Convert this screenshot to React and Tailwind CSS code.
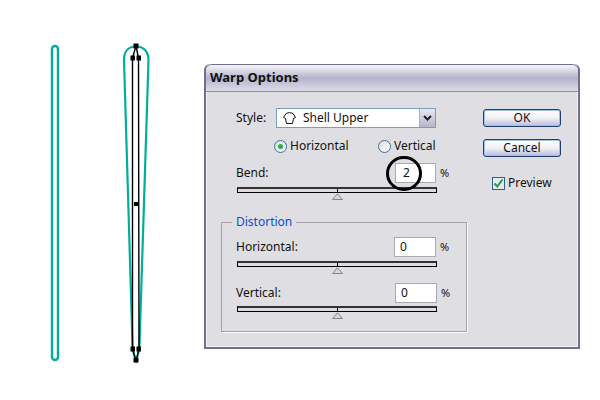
import React from 'react';

const UI_FONT = 'font-["Noto_Sans",sans-serif]';

function Slider() {
  return (
    <div className="relative w-[200px] h-[6px] ml-[1px] bg-[#dcdce0] border border-black border-t-2 border-t-[#333]">
      <div className="absolute left-[99px] top-0 w-px h-[4px] bg-black" />
      <svg className="absolute left-[93px] top-[4px]" width="13" height="8" viewBox="0 0 13 8">
        <path d="M6.5 .8 L11.5 6.5 H1.5 Z" fill="#d8d8d4" stroke="#85857d" strokeWidth="1" />
      </svg>
    </div>
  );
}

function NumberBox({ value, className }) {
  return (
    <div className={`h-[20px] bg-white border border-[#a9abb0] text-[12px] leading-[18px] pl-[5px] text-[#111] ${className}`}>{value}</div>
  );
}

function Radio({ checked }) {
  return (
    <div className="w-[13px] h-[13px] rounded-full border border-[#3f6e94] bg-gradient-to-br from-[#dcdce2] to-white flex items-center justify-center shrink-0">
      {checked && <div className="w-[5px] h-[5px] rounded-full bg-[#22b14c]" />}
    </div>
  );
}

function DialogButton({ label, className }) {
  return (
    <button className={`w-[78px] rounded-[3px] border border-[#1f3f70] bg-gradient-to-b from-white via-[#f1f1f6] to-[#b9bbdc] text-[12px] text-[#111] shadow-[inset_0_0_0_1px_#9fc0e8] ${className}`}>
      {label}
    </button>
  );
}

export default function App() {
  return (
    <div className={`relative w-[600px] h-[400px] bg-white flex overflow-hidden ${UI_FONT}`}>
      {/* paths */}
      <svg className="shrink-0" width="204" height="400" viewBox="0 0 204 400">
        <rect x="52" y="46" width="6" height="314" rx="3" fill="none" stroke="#00ae9c" strokeWidth="2.4" />
        <path d="M136 46.5 C128 46.5 124 52 124 60 C124.5 70 128 200 132.5 345 C133 352 135 359 136 360 C137 359 139 352 139.5 345 C144 200 148 70 148.5 60 C148.5 52 144 46.5 136 46.5 Z" fill="none" stroke="#00ae9c" strokeWidth="2.2" />
        <path d="M132.5 58 V349 L136 361 L139 349 L138.5 58 L136 46 Z" fill="none" stroke="#000" strokeWidth="1.4" />
        <rect x="133.5" y="43.5" width="5" height="5" fill="#000" />
        <rect x="130.5" y="55.5" width="4.5" height="5" fill="#000" />
        <rect x="136.5" y="55.5" width="4.5" height="5" fill="#000" />
        <rect x="134" y="202" width="4.5" height="4" fill="#000" />
        <rect x="130.5" y="346.5" width="4.5" height="5" fill="#000" />
        <rect x="136.5" y="346.5" width="4.5" height="5" fill="#000" />
        <rect x="133.5" y="358" width="5" height="4.5" fill="#000" />
      </svg>

      {/* dialog */}
      <div className="mt-[64px] w-[376px] h-[285px] flex flex-col bg-[#dfdfe3] border-2 border-t-0 border-[#70708c] rounded-t-[6px] shadow-[inset_0_0_0_1px_#f4f4f6]">
        <div className="h-[28px] shrink-0 rounded-t-[6px] border-t border-[#70708c] border-b border-b-[#8e8ea6] bg-gradient-to-b from-[#f7f7fa] via-[#b4b4cc] to-[#dcdce6] pl-[4px] pt-[3px] text-[13px] font-bold text-[#111]">
          Warp Options
        </div>

        <div className="flex-1 flex text-[12px] text-[#111]">
          <div className="w-[277px] shrink-0 pl-[15px] flex flex-col">
            {/* style row */}
            <div className="pl-[15px] mt-[16px] flex items-center h-[20px]">
              <span className="w-[40px]">Style:</span>
              <div className="w-[160px] h-[20px] flex border border-[#7b9ebd] bg-white">
                <svg className="ml-[5px] mt-[2px]" width="15" height="15" viewBox="0 0 15 15">
                  <path d="M4 2.5 L7.5 1.5 L11 2.5 L13.5 6.5 L11.5 7.5 L10.5 12.5 H4.5 L3.5 7.5 L1.5 6.5 Z" fill="#fff" stroke="#111" strokeWidth="1" />
                </svg>
                <span className="ml-[6px] leading-[18px]">Shell Upper</span>
                <div className="ml-auto w-[16px] bg-gradient-to-b from-[#e8e8ee] to-[#b5b5cc] border-l border-[#9fb0c4] flex items-center justify-center">
                  <svg width="9" height="6" viewBox="0 0 9 6">
                    <path d="M1 1 L4.5 4.5 L8 1" fill="none" stroke="#222" strokeWidth="2" />
                  </svg>
                </div>
              </div>
            </div>

            {/* orientation */}
            <div className="mt-[8px] ml-[53px] flex items-center h-[20px]">
              <Radio checked />
              <span className="ml-[3px] w-[88px]">Horizontal</span>
              <Radio />
              <span className="ml-[3px]">Vertical</span>
            </div>

            {/* bend */}
            <div className="mt-[7px] pl-[15px] flex items-center h-[20px]">
              <span className="w-[159px]">Bend:</span>
              <NumberBox value="2" className="w-[41px] pl-[7px]" />
              <span className="ml-[4px] text-[11px]">%</span>
            </div>
            <div className="mt-[4px] ml-[15px]"><Slider /></div>

            {/* distortion group */}
            <div className="relative mt-[29px] w-[246px] h-[110px] border border-[#a4a4a8] shadow-[1px_1px_0_#fff] pl-[14px]">
              <span className="absolute left-[10px] -top-[10px] px-[4px] bg-[#dfdfe3] text-[#0a4ed6]">Distortion</span>
              <div className="mt-[14px] flex items-center h-[20px]">
                <span className="w-[158px]">Horizontal:</span>
                <NumberBox value="0" className="w-[42px]" />
                <span className="ml-[4px] text-[11px]">%</span>
              </div>
              <div className="mt-[4px]"><Slider /></div>
              <div className="mt-[16px] flex items-center h-[20px]">
                <span className="w-[159px]">Vertical:</span>
                <NumberBox value="0" className="w-[42px]" />
                <span className="ml-[4px] text-[11px]">%</span>
              </div>
              <div className="mt-[3px]"><Slider /></div>
            </div>
          </div>

          {/* buttons */}
          <div className="flex flex-col">
            <DialogButton label="OK" className="mt-[17px] h-[18px] leading-[16px]" />
            <DialogButton label="Cancel" className="mt-[12px] h-[18px] leading-[16px]" />
            <div className="mt-[17px] ml-[9px] flex items-center">
              <div className="w-[13px] h-[13px] bg-[#e8e8ec] border border-[#2f5f8f] flex items-center justify-center">
                <svg width="11" height="11" viewBox="0 0 11 11">
                  <path d="M1.5 5.5 L4.3 8.5 L9.5 1.5" fill="none" stroke="#1e9e3e" strokeWidth="2" />
                </svg>
              </div>
              <span className="ml-[3px]">Preview</span>
            </div>
          </div>
        </div>
      </div>

      {/* callout circle */}
      <div className="absolute left-[386px] top-[156px] w-[36px] h-[35px] rounded-full border-[3px] border-black" />
    </div>
  );
}
